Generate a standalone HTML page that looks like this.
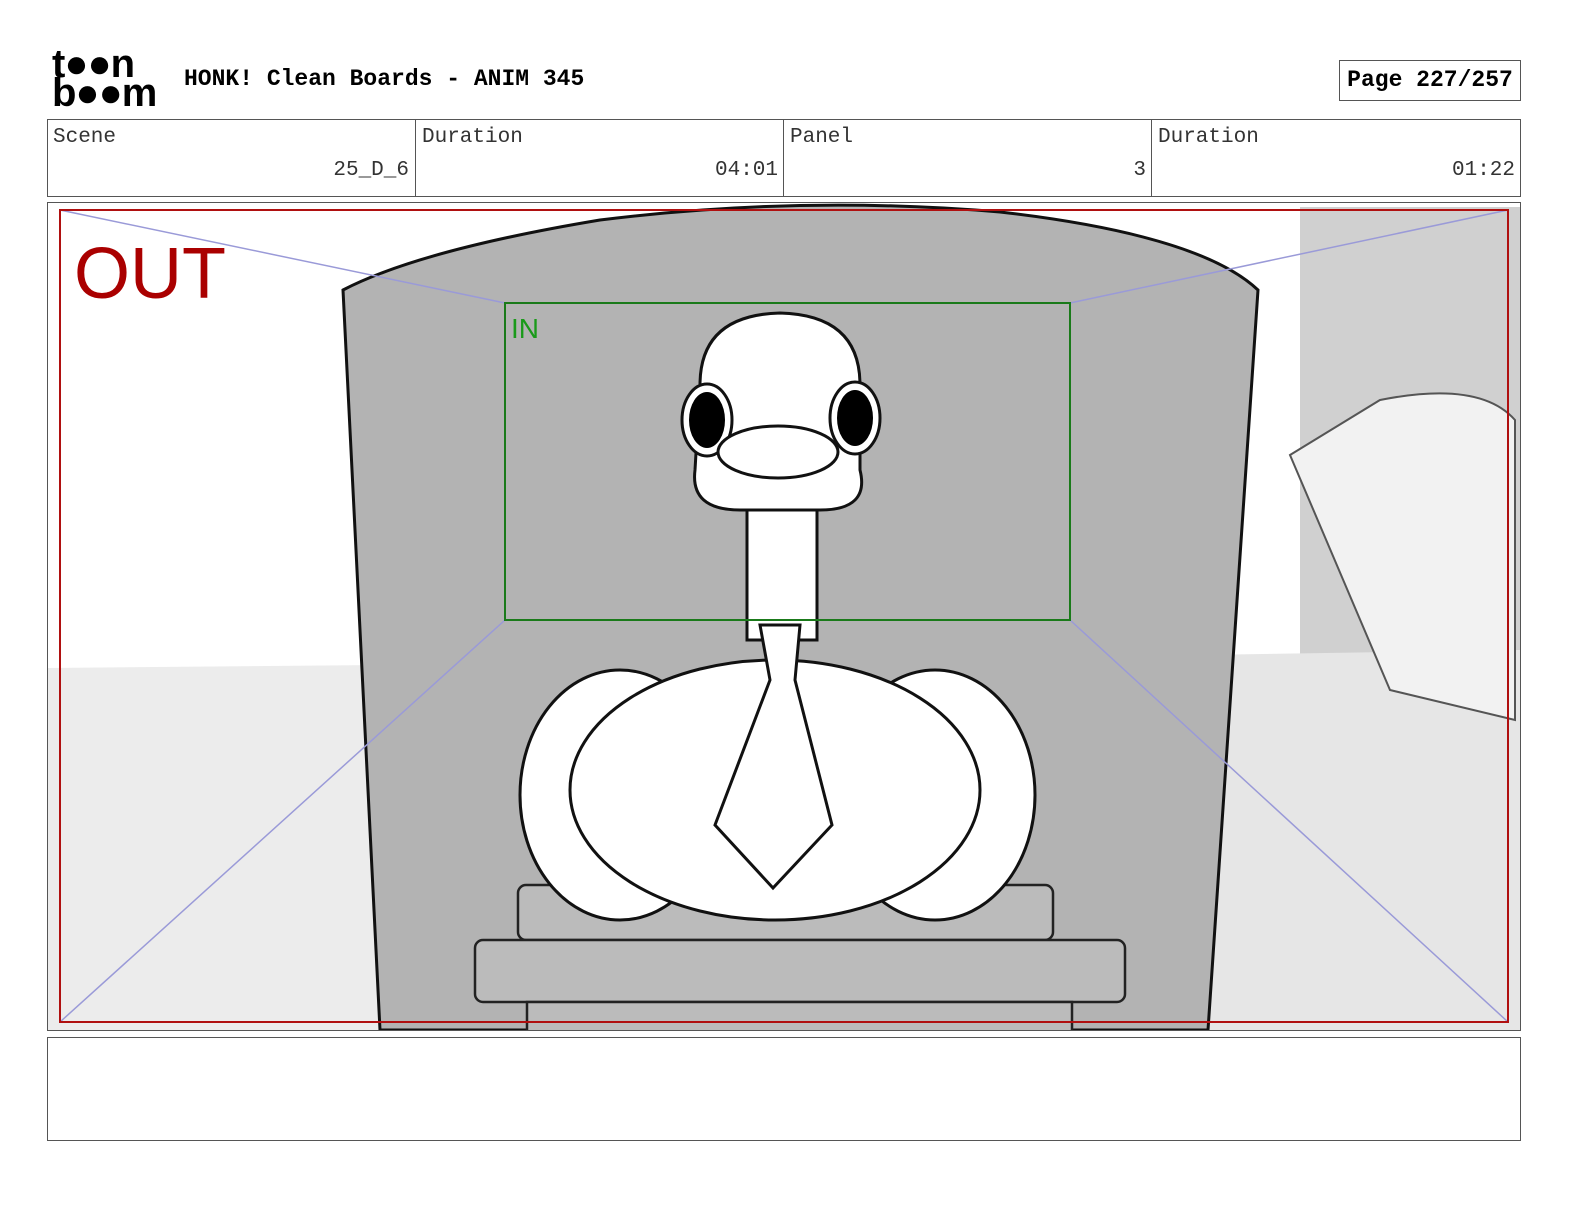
<!DOCTYPE html>
<html><head><style>
body{margin:0;width:1584px;height:1224px;background:#fff;position:relative;font-family:"Liberation Mono",monospace;overflow:hidden}
.a{position:absolute}
.cell{position:absolute;top:120px;height:76px;border-left:1px solid #555;font-size:21px;color:#333}
.cell .l{position:absolute;left:6px;top:6px}
.cell .v{position:absolute;right:6px;top:39px}
</style></head><body>
<div class="a" style="left:52px;top:50px;font-family:'Liberation Sans',sans-serif;font-weight:bold;font-size:40px;line-height:29px;letter-spacing:-1px;color:#000">t●●n<br>b●●m</div>
<div class="a" style="left:184px;top:66px;font-size:23px;font-weight:bold">HONK! Clean Boards - ANIM 345</div>
<div class="a" style="left:1339px;top:60px;width:182px;height:41px;border:1px solid #555;box-sizing:border-box;font-size:23px;font-weight:bold;text-align:center;line-height:39px">Page 227/257</div>
<div class="a" style="left:47px;top:119px;width:1474px;height:78px;border:1px solid #555;box-sizing:border-box"></div>
<div class="cell" style="left:47px;width:368px;border-left:none"><span class="l">Scene</span><span class="v">25_D_6</span></div>
<div class="cell" style="left:415px;width:368px"><span class="l">Duration</span><span class="v">04:01</span></div>
<div class="cell" style="left:783px;width:368px"><span class="l">Panel</span><span class="v">3</span></div>
<div class="cell" style="left:1151px;width:369px"><span class="l">Duration</span><span class="v">01:22</span></div>
<div class="a" style="left:47px;top:202px;width:1474px;height:829px;border:1px solid #555;box-sizing:border-box;overflow:hidden">
<svg width="1472" height="827" viewBox="48 203 1472 827">
<rect x="48" y="203" width="1472" height="827" fill="#fff"/>
<rect x="1300" y="207" width="220" height="450" fill="#d0d0d0"/>
<path d="M48 668 L380 665 L380 1030 L48 1030Z" fill="#ececec"/>
<path d="M1200 655 L1520 650 L1520 1030 L1200 1030Z" fill="#e6e6e6"/>
<path d="M343 290 Q420 250 600 220 Q800 195 1000 212 Q1200 235 1258 290 L1208 1030 L380 1030 Z" fill="#b3b3b3" stroke="#111" stroke-width="3"/>
<g stroke="#9a9ad8" stroke-width="1.5" fill="none"><line x1="60" y1="210" x2="505" y2="303"/><line x1="1508" y1="210" x2="1070" y2="303"/><line x1="60" y1="1022" x2="505" y2="620"/><line x1="1508" y1="1022" x2="1070" y2="620"/></g>
<g fill="#bbb" stroke="#222" stroke-width="2.5"><rect x="518" y="885" width="535" height="55" rx="8"/><rect x="475" y="940" width="650" height="62" rx="8"/><rect x="527" y="1002" width="545" height="30"/></g>
<g fill="#fff" stroke="#111" stroke-width="3">
<ellipse cx="620" cy="795" rx="100" ry="125"/><ellipse cx="935" cy="795" rx="100" ry="125"/>
<ellipse cx="775" cy="790" rx="205" ry="130"/>
<rect x="747" y="490" width="70" height="150"/>
<path d="M700 385 Q700 315 780 313 Q860 315 860 385 L860 470 Q870 510 820 510 L740 510 Q690 510 695 470Z"/>
<ellipse cx="707" cy="420" rx="25" ry="36" /><ellipse cx="855" cy="418" rx="25" ry="36"/>
<ellipse cx="778" cy="452" rx="60" ry="26"/>
<path d="M760 625 L800 625 L795 680 L832 825 L773 888 L715 825 L770 680Z"/>
</g>
<ellipse cx="707" cy="420" rx="18" ry="28" fill="#000"/><ellipse cx="855" cy="418" rx="18" ry="28" fill="#000"/>
<path d="M1290 455 L1380 400 Q1480 380 1515 420 L1515 720 L1390 690Z" fill="#f2f2f2" stroke="#555" stroke-width="2"/>
<rect x="60" y="210" width="1448" height="812" fill="none" stroke="#b01010" stroke-width="2"/>
<rect x="505" y="303" width="565" height="317" fill="none" stroke="#1a7a1a" stroke-width="2"/>
<text x="511" y="338" font-family="Liberation Sans" font-size="28" fill="#1a9a1a">IN</text>
<text x="74" y="298" font-family="Liberation Sans" font-size="72" fill="#aa0000">OUT</text>
</svg></div>
<div class="a" style="left:47px;top:1037px;width:1474px;height:104px;border:1px solid #555;box-sizing:border-box"></div>
</body></html>
